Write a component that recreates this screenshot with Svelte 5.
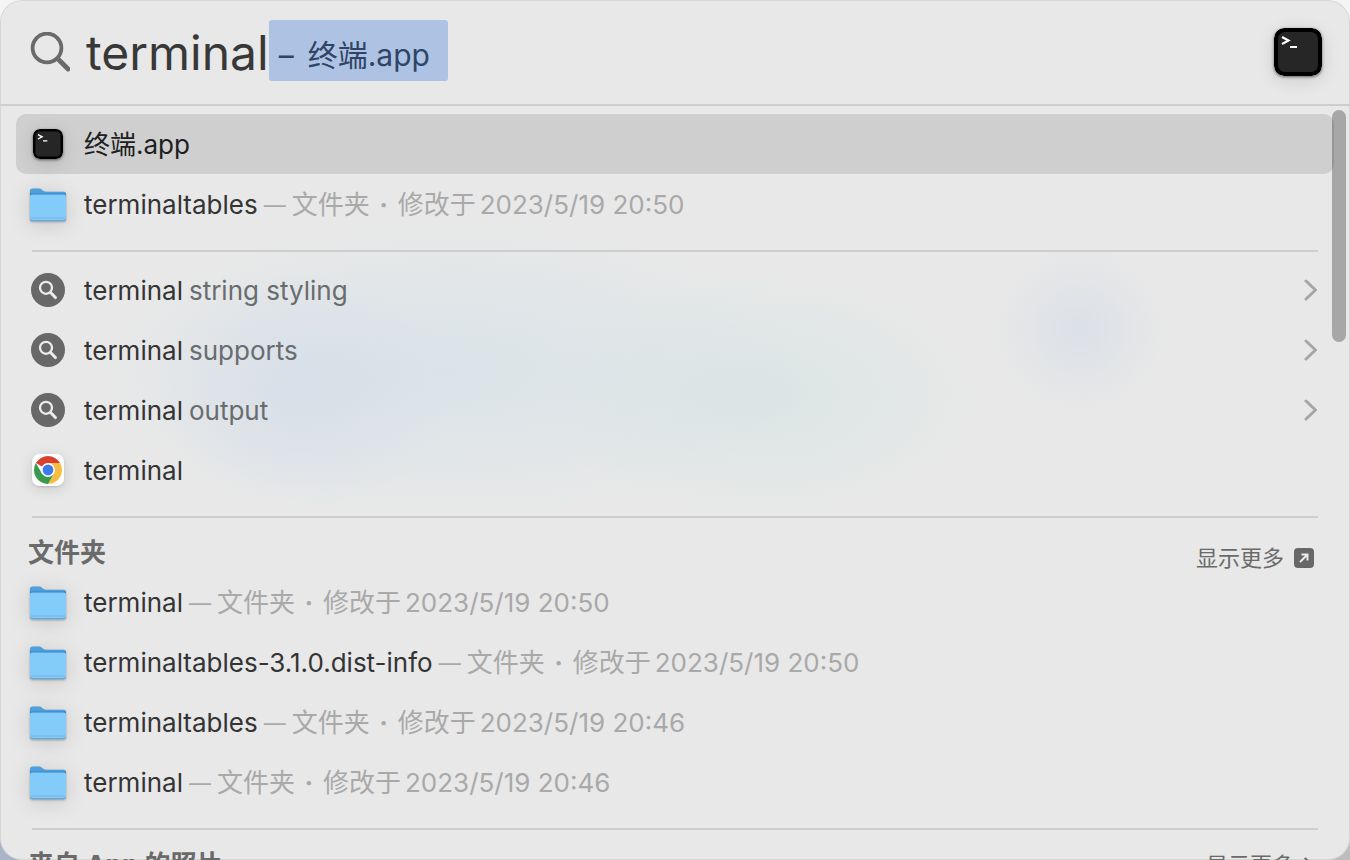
<script>
  let query = $state('terminal');
  let selected = $state('top-0');

  const sections = [
    {
      id: 'top',
      rows: [
        { icon: 'terminal', name: '终端.app' },
        { icon: 'folder', name: 'terminaltables', date: '2023/5/19 20:50' }
      ]
    },
    {
      id: 'web',
      rows: [
        { icon: 'search', name: 'terminal', rest: 'string styling', more: true },
        { icon: 'search', name: 'terminal', rest: 'supports', more: true },
        { icon: 'search', name: 'terminal', rest: 'output', more: true },
        { icon: 'chrome', name: 'terminal' }
      ]
    },
    {
      id: 'folders',
      title: '文件夹',
      action: 'open',
      rows: [
        { icon: 'folder', name: 'terminal', date: '2023/5/19 20:50' },
        { icon: 'folder', name: 'terminaltables-3.1.0.dist-info', date: '2023/5/19 20:50' },
        { icon: 'folder', name: 'terminaltables', date: '2023/5/19 20:46' },
        { icon: 'folder', name: 'terminal', date: '2023/5/19 20:46' }
      ]
    },
    { id: 'photos', title: '来自 App 的照片', action: 'expand', rows: [] }
  ];
</script>

{#snippet terminalIcon()}
  <svg class="terminal" viewBox="0 0 48 48" aria-hidden="true">
    <rect width="48" height="48" rx="10" fill="#000" />
    <rect x="4" y="4" width="40" height="40" rx="7" fill="#262626" />
    <path d="M8 9l6.500 3.500L8 16" fill="none" stroke="#fff" stroke-width="2.200" />
    <path d="M16 19h7" stroke="#fff" stroke-width="2" />
  </svg>
{/snippet}

{#snippet folderIcon()}
  <svg class="folder" viewBox="0 -2 38 36" aria-hidden="true">
    <path d="M1 3Q1 .5 3.500 .5H10Q11.500 .5 12.600 1.400L14.500 3Q15.600 3.800 17 3.800H35Q37 3.800 37 6V20H1Z" fill="#4e9fdb" />
    <path d="M1 5.500H37V9H1Z" fill="#3586cc" />
    <path d="M1 8.500Q1 6.500 3 6.500H35Q37 6.500 37 8.500V31Q37 33 35 33H3Q1 33 1 31Z" fill="#83cbf8" />
    <path d="M1.500 30H36.500" stroke="#6fb7e6" />
    <path d="M1.200 31Q1.500 32.700 3 32.700H35Q36.500 32.700 36.800 31" fill="none" stroke="#5fa2cf" />
  </svg>
{/snippet}

{#snippet searchIcon()}
  <svg class="badge" viewBox="0 0 34 34" aria-hidden="true">
    <circle cx="17" cy="17" r="17" fill="#686868" />
    <circle cx="15" cy="14.800" r="6" fill="none" stroke="#ececec" stroke-width="2.300" />
    <path d="M19.600 19.400L24.400 24.600" stroke="#ececec" stroke-width="3" stroke-linecap="round" />
  </svg>
{/snippet}

{#snippet chromeIcon()}
  <svg class="chrome" viewBox="0 0 32 32" aria-hidden="true">
    <rect width="32" height="32" rx="7" fill="#fff" />
    <path d="M16 16L3.880 9A14 14 0 0 1 28.120 9Z" fill="#d9402f" />
    <path d="M16 9H28.120A14 14 0 0 1 16 30L22.060 19.500Z" fill="#f7bd40" />
    <path d="M3.880 9L9.940 19.500L22.060 19.500L16 30A14 14 0 0 1 3.880 9Z" fill="#3a9a4b" />
    <circle cx="16" cy="16" r="7" fill="#fff" />
    <circle cx="16" cy="16" r="5.400" fill="#3f7be8" />
  </svg>
{/snippet}

{#snippet chevron()}
  <svg class="chevron" viewBox="0 0 14 22" aria-hidden="true">
    <path d="M2 2L11.500 11L2 20" fill="none" stroke="currentColor" stroke-width="3" stroke-linecap="round" stroke-linejoin="round" />
  </svg>
{/snippet}

<main class="panel">
  <header class="bar">
    <label class="glass" for="query" aria-label="搜索">
      <svg viewBox="0 0 40 40" aria-hidden="true">
        <circle cx="17" cy="16" r="14.400" fill="none" stroke="#6a6a6a" stroke-width="3.800" />
        <path d="M27.500 26.500L38 37" stroke="#6a6a6a" stroke-width="4.800" stroke-linecap="round" />
      </svg>
    </label>
    <input id="query" type="text" bind:value={query} autocomplete="off" spellcheck="false" />
    <span class="completion"><span>–</span><span>终端.app</span></span>
    <span class="preview">{@render terminalIcon()}</span>
  </header>

  <div class="results">
    {#each sections as section (section.id)}
      <section>
        {#if section.title}
          <div class="heading">
            <h2>{section.title}</h2>
            <button class="show-more {section.action}">
              显示更多
              {#if section.action === 'open'}
                <svg class="arrow" viewBox="0 0 20 20" aria-hidden="true">
                  <rect width="20" height="20" rx="4" fill="#686868" />
                  <path d="M6 14L13 7M7.500 6.500H13.500V12.500" fill="none" stroke="#ececec" stroke-width="1.900" />
                </svg>
              {:else}
                {@render chevron()}
              {/if}
            </button>
          </div>
        {/if}
        {#each section.rows as row, i}
          <button
            class="row"
            class:selected={selected === `${section.id}-${i}`}
            onclick={() => (selected = `${section.id}-${i}`)}
          >
            <span class="icon">
              {#if row.icon === 'terminal'}
                {@render terminalIcon()}
              {:else if row.icon === 'folder'}
                {@render folderIcon()}
              {:else if row.icon === 'search'}
                {@render searchIcon()}
              {:else}
                {@render chromeIcon()}
              {/if}
            </span>
            <span class="name">{row.name}</span>
            {#if row.rest}<span class="rest">{row.rest}</span>{/if}
            {#if row.date}
              <span class="meta">
                <span class="dash">—</span>
                <span>文件夹</span>
                <span class="dot">·</span>
                <span>修改于</span>
                <span class="date">{row.date}</span>
              </span>
            {/if}
            {#if row.more}{@render chevron()}{/if}
          </button>
        {/each}
      </section>
    {/each}
  </div>
  <div class="scroll-thumb"></div>
</main>

<style>
  :global(body) {
    background: linear-gradient(to bottom, #f4f4f4 0 50%, transparent 50%),
      linear-gradient(to right, #a9b4c8, #bdbdbd 50%);
  }

  .panel {
    position: relative;
    box-sizing: border-box;
    display: flex;
    flex-direction: column;
    height: 100vh;
    overflow: hidden;
    border-radius: 22px;
    box-shadow: inset 0 0 0 1px #d6d6d6;
    background:
      radial-gradient(ellipse 150px 120px at 300px 390px, #d3dce9b0, #d3dce900),
      radial-gradient(ellipse 90px 85px at 1080px 330px, #d6dde6b0, #d6dde600),
      radial-gradient(ellipse 360px 150px at 450px 370px, #d5e2e8c0, #d5e2e800),
      radial-gradient(ellipse 220px 120px at 760px 395px, #d6e4e4c0, #d6e4e400),
      #e8e8e8;
    color: #343434;
    font-family: Inter, "Noto Sans CJK SC", sans-serif;
    font-size: 26px;
    line-height: 36px;
  }

  button {
    border: 0;
    background: none;
    color: inherit;
    font: inherit;
    text-align: left;
  }

  svg {
    display: block;
    flex: none;
  }

  .bar {
    flex: none;
    display: flex;
    align-items: center;
    box-sizing: border-box;
    height: 106px;
    padding: 0 28px 0 30px;
    border-bottom: 2px solid #cecece;
  }

  .glass {
    width: 56px;
  }

  .glass svg {
    width: 40px;
    height: 40px;
  }

  input {
    field-sizing: content;
    box-sizing: border-box;
    height: 64px;
    min-width: 20px;
    padding: 0;
    border: 0;
    outline: 0;
    background: none;
    color: #383838;
    font: 48px Inter, "Noto Sans CJK SC", sans-serif;
  }

  .completion {
    display: flex;
    align-items: center;
    gap: 14px;
    box-sizing: border-box;
    height: 61px;
    margin: 0 0 4px;
    padding: 10px 18px 0 10px;
    border-radius: 3px;
    background: #aec3e3;
    color: #2f4566;
    font-size: 30px;
  }

  .preview {
    margin-left: auto;
  }

  .terminal {
    width: 30px;
    height: 30px;
    border-radius: 7px;
    box-shadow: 0 1px 3px #0008, 0 4px 18px #0002;
  }

  .preview .terminal {
    width: 48px;
    height: 48px;
    border-radius: 10px;
  }

  .results {
    flex: 1;
    min-height: 0;
    overflow: hidden;
    padding: 8px 16px 0;
  }

  section + section::before {
    content: "";
    display: block;
    height: 2px;
    margin: 16px 16px 0;
    background: #cdcdcd;
  }

  section + section .row:first-of-type {
    margin-top: 8px;
  }

  section + section .heading + .row:first-of-type {
    margin-top: 0;
  }

  .row {
    display: flex;
    align-items: center;
    box-sizing: border-box;
    width: 100%;
    height: 60px;
    padding: 2px 16px 0 12px;
    border-radius: 10px;
  }

  .row.selected {
    background: #cfcfcf;
    color: #202020;
  }

  .icon {
    display: grid;
    place-items: center;
    width: 40px;
    margin: 0 16px 2px 0;
  }

  .folder {
    width: 38px;
    height: 36px;
    filter: drop-shadow(0 1px 1px #0004) drop-shadow(0 3px 10px #0002);
  }

  .badge {
    width: 34px;
    height: 34px;
  }

  .chrome {
    width: 32px;
    height: 32px;
    border-radius: 7px;
    box-shadow: 0 1px 2px #0002, 0 3px 14px #0002;
  }

  .rest {
    margin-left: 6px;
    color: #696c6e;
  }

  .meta {
    display: flex;
    margin-left: 6px;
    color: #a9a9a9;
  }

  .dash {
    margin-right: 6px;
    font-size: 22px;
  }

  .dot {
    width: 28px;
    font-weight: 700;
    text-align: center;
  }

  .date {
    margin-left: 4px;
  }

  .chevron {
    width: 14px;
    height: 22px;
    margin: 0 0 2px auto;
    color: #a6a6a6;
  }

  .heading {
    display: flex;
    align-items: center;
    justify-content: space-between;
    height: 54px;
    padding: 16px 20px 0 12px;
    box-sizing: border-box;
    color: #6a6a6a;
  }

  h2 {
    margin: 0;
    font-size: 26px;
    font-weight: 700;
  }

  .show-more {
    display: flex;
    align-items: center;
    gap: 10px;
    padding: 10px 0 0;
    font-size: 22px;
    line-height: 32px;
  }

  .show-more.expand {
    padding: 0;
  }

  .show-more .chevron {
    width: 10px;
    height: 16px;
    margin: 0;
    color: #6a6a6a;
  }

  .arrow {
    width: 20px;
    height: 20px;
  }

  .scroll-thumb {
    position: absolute;
    top: 110px;
    right: 4px;
    width: 14px;
    height: 27%;
    border-radius: 7px;
    background: rgb(0 0 0 / 28%);
  }
</style>
